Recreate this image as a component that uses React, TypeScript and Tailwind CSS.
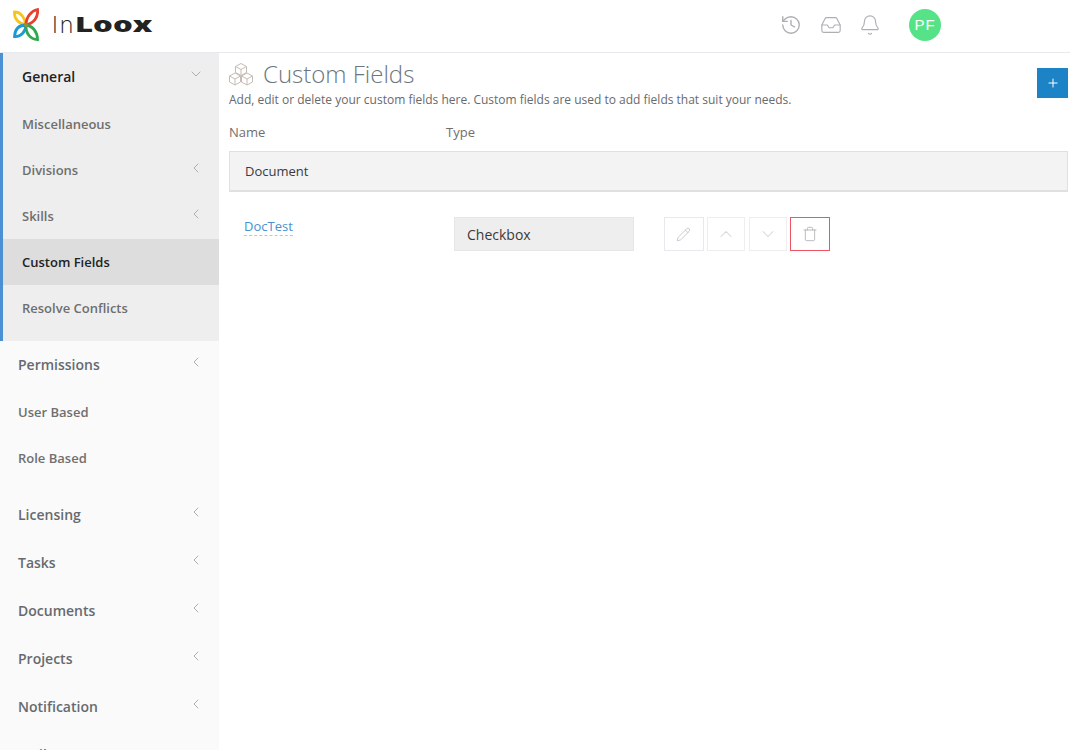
import React from 'react';
import { ChevronDown, ChevronLeft, ChevronUp, History, Inbox, Bell, Pencil, Plus, Trash } from 'lucide-react';

const Chevron = ({ open }: { open?: boolean }) =>
  open ? (
    <ChevronDown className="w-4 h-4 text-[#abaeb2] mb-1" strokeWidth={1.5} />
  ) : (
    <ChevronLeft className="w-4 h-4 text-[#abaeb2] mb-1" strokeWidth={1.5} />
  );

const SubItem = ({ label, arrow, active }: { label: string; arrow?: boolean; active?: boolean }) => (
  <div className={`flex items-center justify-between h-[46px] pl-[19px] pr-[15px] text-[13px] font-semibold ${active ? 'bg-[#dddddd] text-[#222222]' : 'text-[#6f6f6f]'}`}>
    <span className="mt-[2px]">{label}</span>
    {arrow && <Chevron />}
  </div>
);

const TopItem = ({ label, raised, noArrow }: { label: string; raised?: boolean; noArrow?: boolean }) => (
  <div className={`flex items-center justify-between h-12 pl-[18px] pr-[15px] text-[14px] font-semibold text-[#666a70] ${raised ? 'pb-[2px]' : ''}`}>
    <span>{label}</span>
    {!noArrow && <Chevron />}
  </div>
);

const Logo = () => (
  <svg width="26" height="33" viewBox="0 0 26 33" fill="none" strokeWidth="2.8">
    <path d="M13 17C12 10 8 4 1.5 4C1 11 6 16 13 17Z" stroke="#f4c51c" />
    <path d="M13 17C13 9 18 3 24.5 1.5C25.5 9 21 15 13 17Z" stroke="#e8402f" />
    <path d="M13 17C6 17 2 21 1.5 28.5C8 29 12.5 24 13 17Z" stroke="#1b9ad6" />
    <path d="M13 17C20 18 24.5 24 24.5 31.5C17 31.5 12.5 25 13 17Z" stroke="#2fa84f" />
    <circle cx="13" cy="17" r="2" fill="#a08a3c" />
  </svg>
);

const Cubes = () => (
  <svg width="26" height="24" viewBox="0 0 26 24" fill="none" stroke="#c6bcb4" strokeWidth="1">
    <path d="M13 1.5L18.5 4.5V10.5L13 13.5L7.5 10.5V4.5Z M7.5 4.5L13 7.5L18.5 4.5 M13 7.5V13.5" />
    <path d="M7 11L12.5 14V20L7 23L1.5 20V14Z M1.5 14L7 17L12.5 14 M7 17V23" />
    <path d="M19 11L24.5 14V20L19 23L13.5 20V14Z M13.5 14L19 17L24.5 14 M19 17V23" />
  </svg>
);

export default function App() {
  return (
    <div className="h-[750px] overflow-hidden bg-white font-['Open_Sans',sans-serif]">
      <header className="flex items-center h-[53px] border-b border-[#e7e9ec]">
        <div className="flex items-center w-[219px] pl-[13px] mb-[3px]">
          <Logo />
          <span className="ml-[13px] text-[23px] leading-none font-light tracking-[2px] text-[#2b2b2b]">In</span>
          <span className="inline-block origin-left scale-x-[1.48] text-[21px] leading-none font-extrabold text-[#222222]">Loox</span>
        </div>
        <div className="flex items-center ml-[561px] mb-[3px] text-[#adafb2]">
          <History className="w-[22px] h-[22px]" strokeWidth={1.5} />
          <Inbox className="w-[22px] h-[22px] ml-[18px]" strokeWidth={1.25} />
          <Bell className="w-[22px] h-[22px] ml-[17px]" strokeWidth={1.25} />
        </div>
        <div className="flex items-center justify-center w-8 h-8 ml-[28px] mb-[2px] rounded-full bg-[#56e388] text-white text-[15px] tracking-[1px] font-['Liberation_Sans',sans-serif]">PF</div>
      </header>

      <div className="flex">
        <aside className="w-[219px] h-[697px] shrink-0 overflow-hidden bg-[#fafafa]">
          <div className="h-[288px] bg-[#eeeeee] border-l-[3px] border-[#4a90d2]">
            <div className="flex items-center justify-between h-12 pb-[2px] pl-[19px] pr-[15px] text-[14px] font-semibold text-[#222222]">
              <span>General</span>
              <Chevron open />
            </div>
            <SubItem label="Miscellaneous" />
            <SubItem label="Divisions" arrow />
            <SubItem label="Skills" arrow />
            <SubItem label="Custom Fields" active />
            <SubItem label="Resolve Conflicts" />
          </div>
          <TopItem label="Permissions" raised />
          <div className="pb-[9px]">
            <div className="flex items-center h-[46px] pt-[2px] pl-[18px] text-[13px] font-semibold text-[#6f6f6f]">User Based</div>
            <div className="flex items-center h-[46px] pt-[2px] pl-[18px] text-[13px] font-semibold text-[#6f6f6f]">Role Based</div>
          </div>
          <TopItem label="Licensing" />
          <TopItem label="Tasks" />
          <TopItem label="Documents" />
          <TopItem label="Projects" />
          <TopItem label="Notification" />
          <TopItem label="Mails" noArrow />
        </aside>

        <main className="flex-1 min-w-0 pl-[10px] pr-[2px]">
          <div className="flex items-start justify-between">
            <div>
              <div className="flex items-center gap-[9px] h-[30px] mt-[6px] -ml-[1px]">
                <Cubes />
                <h1 className="text-[24px] font-light text-[#6b7780]">Custom Fields</h1>
              </div>
              <p className="text-[12px] leading-[16px] mt-[3px] text-[#676a6c]">
                Add, edit or delete your custom fields here. Custom fields are used to add fields that suit your needs.
              </p>
            </div>
            <button className="flex items-center justify-center w-[31px] h-[30px] mt-[15px] bg-[#1c84c6] text-white">
              <Plus className="w-[14px] h-[14px]" strokeWidth={1.75} />
            </button>
          </div>

          <div className="flex mt-[15px] text-[13px] leading-[18px] text-[#6f6f6f]">
            <span className="w-[217px]">Name</span>
            <span>Type</span>
          </div>

          <div className="flex items-center h-[41px] mt-[10px] pt-[2px] pl-[15px] bg-[#f3f3f3] border border-[#e0e0e0] border-b-2 text-[13px] text-[#3a3a3a]">
            Document
          </div>

          <div className="flex items-start mt-[25px]">
            <div className="w-[225px] pl-[15px]">
              <span className="block w-fit text-[13px] leading-[18px] text-[#4a90d2] border-b border-dashed border-[#c4c4c4]">DocTest</span>
            </div>
            <div className="flex items-center w-[180px] h-[34px] pl-[12px] bg-[#eeeeee] border border-[#e5e6e7] text-[14px] text-[#3a3a3a]">
              Checkbox
            </div>
            <div className="flex items-center ml-[30px] gap-[3px]">
              <button className="flex items-center justify-center w-10 h-[34px] border border-[#e7eaec] text-[#bdbdbd]">
                <Pencil className="w-[15px] h-[15px] -ml-[2px]" strokeWidth={1.25} />
              </button>
              <button className="flex items-center justify-center w-[38px] h-[34px] border border-[#eeeeee] text-[#d6d6d6]">
                <ChevronUp className="w-5 h-5" strokeWidth={1.25} />
              </button>
              <button className="flex items-center justify-center w-[38px] h-[34px] ml-[1px] border border-[#eeeeee] text-[#d6d6d6]">
                <ChevronDown className="w-5 h-5" strokeWidth={1.25} />
              </button>
              <button className="flex items-center justify-center w-10 h-[34px] border border-[#ed5565] text-[#adafb2]">
                <Trash className="w-4 h-4" strokeWidth={1.25} />
              </button>
            </div>
          </div>
        </main>
      </div>
    </div>
  );
}
